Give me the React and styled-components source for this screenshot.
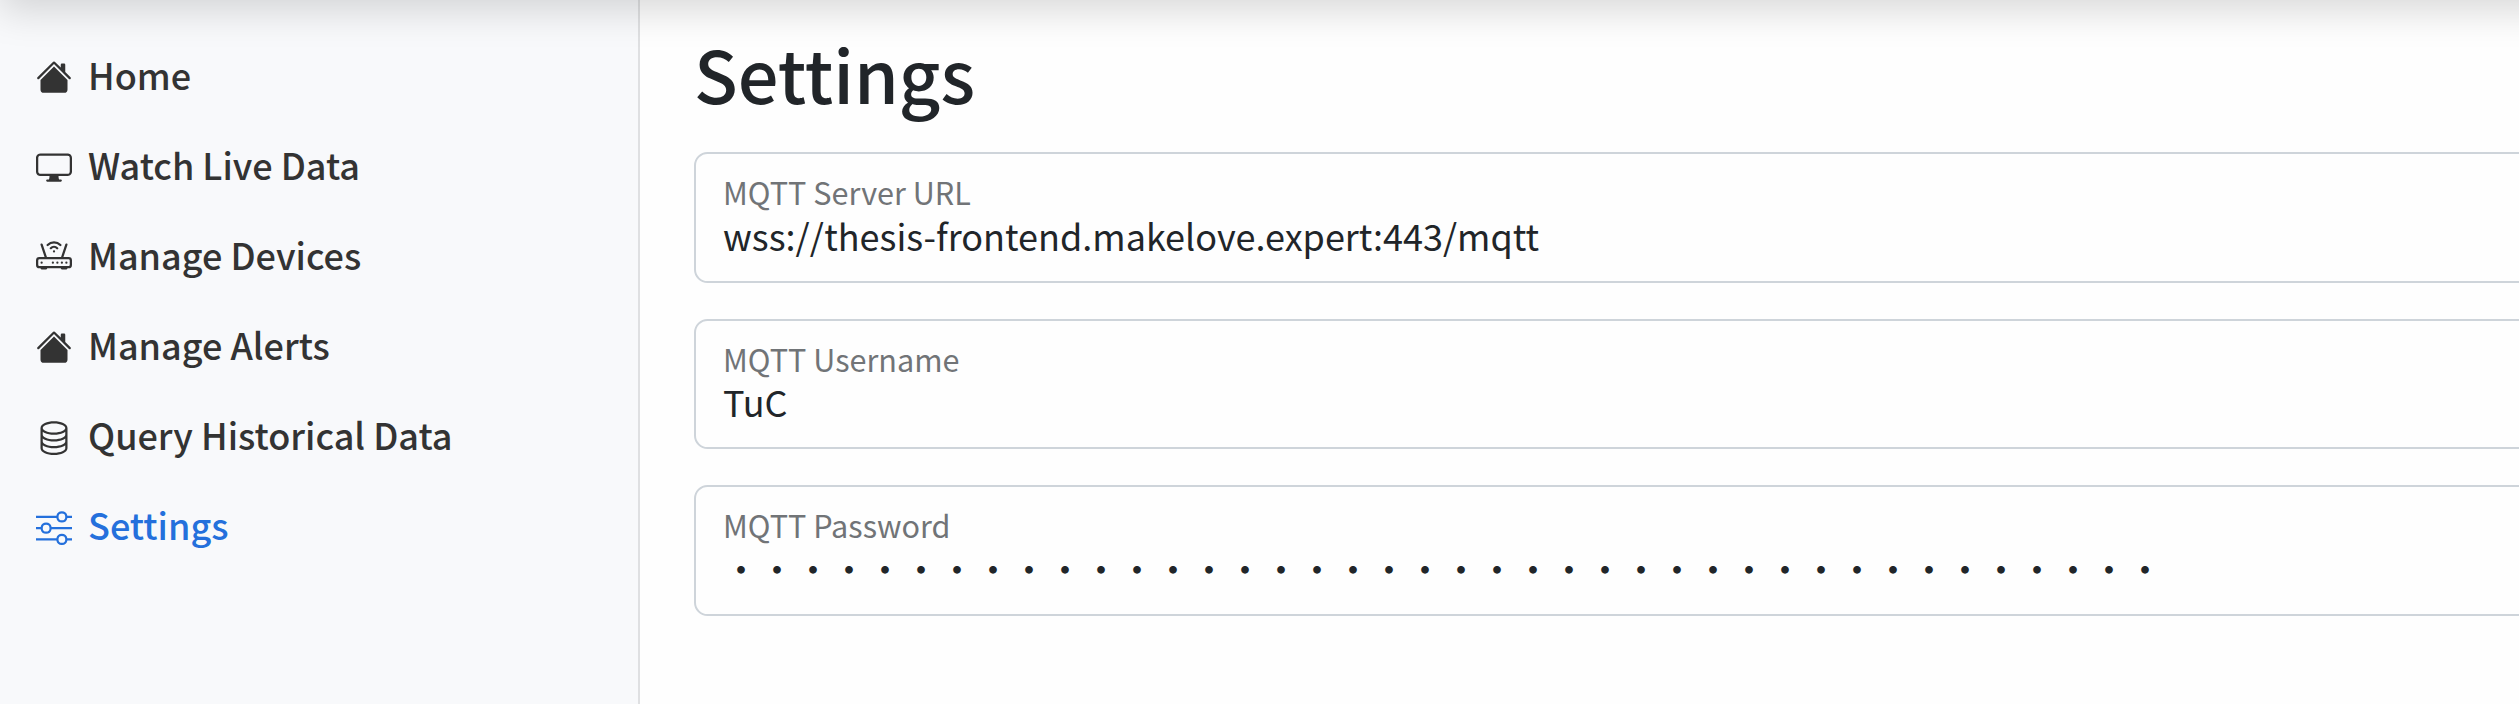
import React from "react";
import styled, { createGlobalStyle } from "styled-components";
import { BsHouseFill, BsDisplay, BsRouter, BsDatabase, BsSliders } from "react-icons/bs";

const GlobalStyle = createGlobalStyle`
  *, *::before, *::after { box-sizing: border-box; }
  body {
    margin: 0;
    overflow: hidden;
    background: #fefefe;
    color: #212529;
    font-family: "Noto Sans CJK SC", "Noto Sans", sans-serif;
    font-size: 36px;
    line-height: 54px;
  }
`;

const Page = styled.div`
  position: relative;
  display: flex;
  height: 704px;
  overflow: hidden;
`;

/* Drop shadow that the top bar casts over the sidebar and the content. */
const TopShadow = styled.div`
  position: absolute;
  left: 0;
  right: -200px;
  top: -130px;
  height: 123px;
  box-shadow: 0 18px 36px rgba(0, 0, 0, 0.15);
  pointer-events: none;
`;

const Sidebar = styled.nav`
  flex: 0 0 640px;
  padding-top: 32px;
  background: #f8f9fb;
  border-right: 2px solid #dfe0e2;
`;

const NavItem = styled.a`
  display: flex;
  align-items: center;
  gap: 16px;
  height: 90px;
  padding-left: 36px;
  font-weight: 500;
  color: ${(p) => (p.$active ? "#2470dc" : "#333")};

  svg {
    display: block;
    width: 36px;
    height: 36px;
  }
`;

const NavLabel = styled.span`
  padding-bottom: 6px;
`;

const Content = styled.main`
  flex: 0 0 auto;
  width: 1960px;
  padding: 30px 27px 0 54px;
`;

const Title = styled.h1`
  margin: 0 0 36px;
  font-size: 72px;
  font-weight: 500;
  line-height: 86px;
`;

const Fields = styled.div`
  display: flex;
  flex-direction: column;
  gap: 36px;
  padding-top: 0.25px;
`;

const Field = styled.div`
  display: flex;
  flex-direction: column;
  gap: 0.7px;
  height: 130.5px;
  padding: 16px 27px 0;
  border: 2px solid #ced4da;
  border-radius: 13.5px;
`;

const Label = styled.div`
  font-size: 30.6px;
  line-height: 44px;
  color: #717477;
`;

const Value = styled.div`
  line-height: 40px;
  white-space: nowrap;
`;

const NAV = [
  { label: "Home", icon: BsHouseFill },
  { label: "Watch Live Data", icon: BsDisplay },
  { label: "Manage Devices", icon: BsRouter },
  { label: "Manage Alerts", icon: BsHouseFill },
  { label: "Query Historical Data", icon: BsDatabase },
  { label: "Settings", icon: BsSliders, active: true },
];

const FIELDS = [
  { label: "MQTT Server URL", value: "wss://thesis-frontend.makelove.expert:443/mqtt" },
  { label: "MQTT Username", value: "TuC" },
  { label: "MQTT Password", value: "•".repeat(40) },
];

export default function App() {
  return (
    <>
      <GlobalStyle />
      <Page>
        <Sidebar>
          {NAV.map(({ label, icon: Icon, active }) => (
            <NavItem key={label} $active={active}>
              <Icon />
              <NavLabel>{label}</NavLabel>
            </NavItem>
          ))}
        </Sidebar>
        <Content>
          <Title>Settings</Title>
          <Fields>
            {FIELDS.map(({ label, value }) => (
              <Field key={label}>
                <Label>{label}</Label>
                <Value>{value}</Value>
              </Field>
            ))}
          </Fields>
        </Content>
        <TopShadow />
      </Page>
    </>
  );
}
